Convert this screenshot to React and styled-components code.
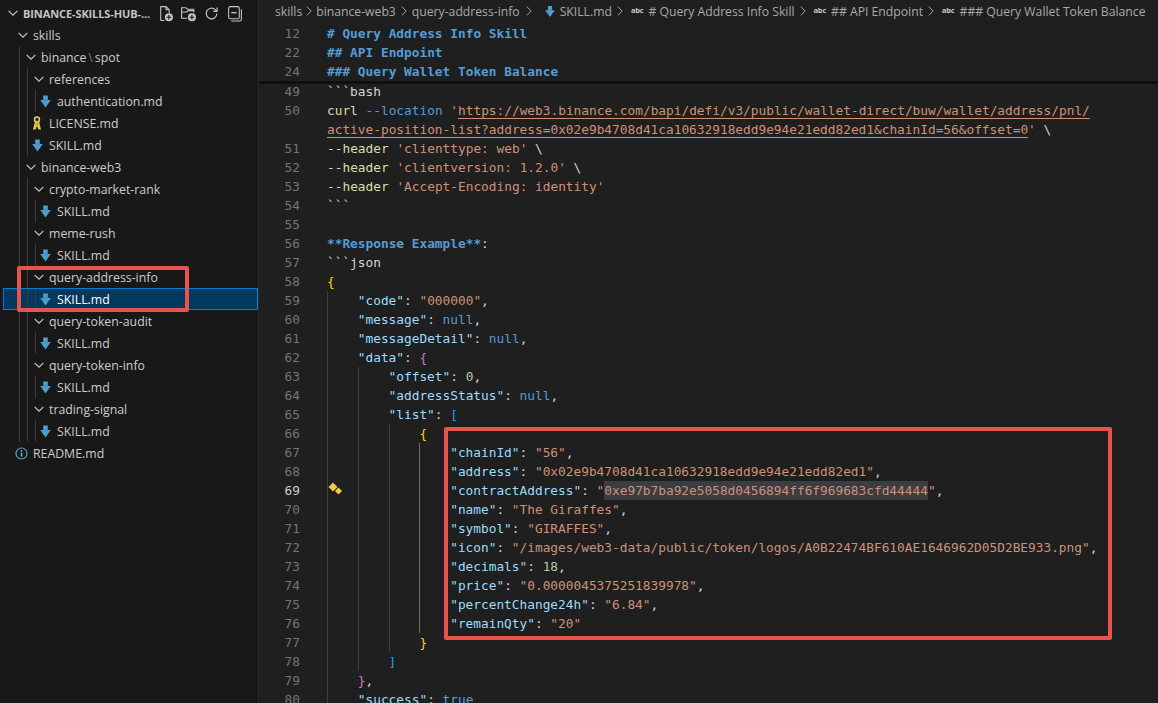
import React from 'react';
import styled, { createGlobalStyle } from 'styled-components';

const Global = createGlobalStyle`
  html, body { margin: 0; padding: 0; background: #1f1f1f; overflow: hidden; }
  #root { width: 1158px; height: 703px; }
`;

const Shell = styled.div`
  display: flex; width: 1158px; height: 703px; overflow: hidden;
  font-family: "Open Sans", "Noto Sans", sans-serif; color: #cccccc;
`;
const Sidebar = styled.aside`
  position: relative; width: 259px; flex: none; box-sizing: border-box;
  background: #181818; border-right: 1px solid #2b2b2b; padding-top: 2px;
`;
const Header = styled.div`
  display: flex; align-items: center; height: 22px; padding-left: 6px;
`;
const RootTitle = styled.span`
  font-size: 11px; font-weight: 700; margin-left: 3px; width: 132px; white-space: nowrap; color: #c4c4c4; letter-spacing: -0.1px;
`;
const Actions = styled.div`
  display: flex; gap: 6px; color: #c5c5c5; margin-left: 2px;
  svg { width: 17px; height: 17px; display: block; }
`;
const Row = styled.div`
  display: flex; align-items: stretch; height: 22px; margin-left: 3px; padding-left: 16px;
  font-size: 12.3px; white-space: nowrap;
  ${p => p.$selected && `background: #04395e; outline: 1px solid #007fd4; outline-offset: -1px; color: #ffffff;`}
`;
const TreeGuide = styled.span`
  flex: none; width: 8px; box-sizing: border-box; border-left: 1px solid #3b3b3b;
`;
const IconSlot = styled.span`
  flex: none; width: 14px; display: flex; align-items: center;
  svg { margin-left: ${p => p.$offset ?? -3}px; flex: none; display: block; }
`;
const RowLabel = styled.span`
  line-height: 24px;
`;
const Slash = styled.span`
  color: #777; padding: 0 2px;
`;
const Mark = styled.div`
  position: absolute; box-sizing: border-box; border-style: solid; border-color: #e9534f; border-radius: 2px; pointer-events: none;
  left: ${p => p.$l}px; top: ${p => p.$t}px; width: ${p => p.$w}px; height: ${p => p.$h}px; border-width: ${p => p.$b}px;
`;
const Editor = styled.main`
  position: relative; flex: 1; min-width: 0; background: #1f1f1f; display: flex; flex-direction: column; overflow: hidden;
`;
const Crumbs = styled.nav`
  display: flex; flex: none; align-items: center; height: 24px; padding: 0 0 2px 16px; box-sizing: border-box;
  font-size: 12.2px; color: #a9a9a9; white-space: nowrap;
`;
const CrumbSep = styled.svg`
  width: 14px; height: 14px; flex: none; margin: 0 ${p => p.$m ?? 1}px; color: #a9a9a9;
`;
const Abc = styled.span`
  font-size: 7.5px; font-weight: 700; margin: 0 5px 2px 3px; color: #c8c8c8; letter-spacing: -0.2px;
`;
const CrumbIcon = styled.span`
  display: flex; margin: 0 5px 0 7px;
`;
const Sticky = styled.div`
  position: relative; z-index: 2; background: #1f1f1f; box-shadow: 0 1px 2px #000; border-bottom: 1px solid #111;
`;
const Code = styled.div`
  font-family: "DejaVu Sans Mono", "Liberation Mono", monospace; font-size: 12.8px; line-height: 19px;
`;
const Line = styled.div`
  position: relative; display: flex; height: 19px; white-space: pre;
`;
const Num = styled.span`
  flex: none; width: 41px; margin-right: 27px; text-align: right; color: ${p => p.$active ? '#cccccc' : '#6e7681'};
`;
const Guide = styled.span`
  flex: none; width: 30.8px; box-sizing: border-box; border-left: 1px solid ${p => p.$active ? '#6f6f57' : '#404040'};
`;
const Body = styled.span`
  flex: none; color: #d4d4d4;
`;
const palette = {
  h: '#569cd6', k: '#9cdcfe', s: '#ce9178', n: '#b5cea8', c: '#569cd6', f: '#dcdcaa',
  y: '#ffd700', p: '#da70d6', b: '#179fff', d: '#d4d4d4',
};
const Tok = styled.span`
  color: ${p => palette[p.$t]};
  ${p => p.$t === 'h' && p.$bold && 'font-weight: 700;'}
  ${p => p.$u && 'text-decoration: underline; text-underline-offset: 3px;'}
  ${p => p.$sel && 'background: #3a3d41; display: inline-block; height: 19px;'}
`;
const Spark = styled.svg`
  position: absolute; left: 68px; top: 1px; width: 16px; height: 16px;
`;

const Chevron = () => (
  <svg width="14" height="14" viewBox="0 0 16 16" fill="none" stroke="#c5c5c5" strokeWidth="1.3"><path d="M3 5.5l5 5 5-5" /></svg>
);
const MdIcon = ({ small }) => (
  <svg width={small ? 10 : 11} height="13" viewBox="0 0 11 13"><path d="M3.2 0.5h4.6v4.6h3L5.5 12.5 0.2 5.1h3z" fill="#4f9dca" /><path d="M3.2 5.1h4.6" stroke="#3b7da3" strokeWidth="0.6" /></svg>
);
const KeyIcon = () => (
  <svg width="10" height="15" viewBox="0 0 10 15" fill="none"><circle cx="5" cy="3.4" r="2.4" stroke="#e3cf55" strokeWidth="1.6" /><path d="M3 5.5L1 13.5h2.6L5 10l1.4 3.5H9L7 5.5z" fill="#dcc84a" /><path d="M5 6.5v3" stroke="#8b7d22" strokeWidth="0.8" /></svg>
);
const InfoIcon = () => (
  <svg width="13" height="13" viewBox="0 0 13 13" fill="none"><circle cx="6.5" cy="6.5" r="5.5" stroke="#4f9dca" strokeWidth="1.2" /><circle cx="6.5" cy="3.8" r="0.9" fill="#6fb3dc" /><path d="M6.5 5.6v4" stroke="#6fb3dc" strokeWidth="1.5" /></svg>
);
const NewFile = () => (
  <svg viewBox="0 0 16 16" fill="none" stroke="currentColor" strokeWidth="1"><path d="M3.5 14.5v-13h5l3 3v3M8.5 1.5v3h3M3.5 14.5h3.5" /><circle cx="11.2" cy="11.5" r="3.8" fill="currentColor" stroke="none" /><path d="M11.2 9.3v4.4M9 11.5h4.4" stroke="#181818" strokeWidth="1.1" /></svg>
);
const NewFolder = () => (
  <svg viewBox="0 0 16 16" fill="none" stroke="currentColor" strokeWidth="1"><path d="M6.5 12.5h-5v-10h4l1.5 1.5h6v3M1.5 6.5h5l1.2-1.2h5.8" /><circle cx="11.2" cy="11.5" r="3.8" fill="currentColor" stroke="none" /><path d="M11.2 9.3v4.4M9 11.5h4.4" stroke="#181818" strokeWidth="1.1" /></svg>
);
const Refresh = () => (
  <svg viewBox="0 0 16 16" fill="none" stroke="currentColor" strokeWidth="1.1"><path d="M13 8a5 5 0 1 1-1.6-3.7L13 5.8" /><path d="M13.2 2.4v3.6H9.6" /></svg>
);
const Collapse = () => (
  <svg viewBox="0 0 16 16" fill="none" stroke="currentColor" strokeWidth="1"><rect x="2.5" y="1.5" width="10" height="11.5" rx="1.5" /><path d="M5 7.2h5" strokeWidth="1.3" /><path d="M14.5 4v9.5a1.5 1.5 0 0 1-1.5 1.5H5" /></svg>
);
const CrumbChevron = ({ m }) => (
  <CrumbSep $m={m} viewBox="0 0 16 16" fill="none" stroke="currentColor" strokeWidth="1.1"><path d="M5.5 3l5 5-5 5" /></CrumbSep>
);

const tree = [
  { d: 0, t: 'skills', kind: 'dir' },
  { d: 1, t: 'binance', slash: 'spot', kind: 'dir' },
  { d: 2, t: 'references', kind: 'dir' },
  { d: 3, t: 'authentication.md', kind: 'md' },
  { d: 2, t: 'LICENSE.md', kind: 'key' },
  { d: 2, t: 'SKILL.md', kind: 'md' },
  { d: 1, t: 'binance-web3', kind: 'dir' },
  { d: 2, t: 'crypto-market-rank', kind: 'dir' },
  { d: 3, t: 'SKILL.md', kind: 'md' },
  { d: 2, t: 'meme-rush', kind: 'dir' },
  { d: 3, t: 'SKILL.md', kind: 'md' },
  { d: 2, t: 'query-address-info', kind: 'dir' },
  { d: 3, t: 'SKILL.md', kind: 'md', selected: true },
  { d: 2, t: 'query-token-audit', kind: 'dir' },
  { d: 3, t: 'SKILL.md', kind: 'md' },
  { d: 2, t: 'query-token-info', kind: 'dir' },
  { d: 3, t: 'SKILL.md', kind: 'md' },
  { d: 2, t: 'trading-signal', kind: 'dir' },
  { d: 3, t: 'SKILL.md', kind: 'md' },
  { d: 0, t: 'README.md', kind: 'info' },
];

const T = (t, x, extra) => ({ t, x, ...extra });
const comma = T('d', ',');
const colon = T('d', ': ');
const kv = (key, tokens) => [T('k', `"${key}"`), colon, ...tokens];

const sticky = [
  { n: 12, tok: [T('h', '# Query Address Info Skill', { bold: 1 })] },
  { n: 22, tok: [T('h', '## API Endpoint', { bold: 1 })] },
  { n: 24, tok: [T('h', '### Query Wallet Token Balance', { bold: 1 })] },
];

const lines = [
  { n: 49, tok: [T('d', '```bash')] },
  { n: 50, tok: [T('f', 'curl'), T('d', ' '), T('c', '--location'), T('d', ' '), T('s', "'"), T('s', 'https://web3.binance.com/bapi/defi/v3/public/wallet-direct/buw/wallet/address/pnl/', { u: 1 })] },
  { tok: [T('s', 'active-position-list?address=0x02e9b4708d41ca10632918edd9e94e21edd82ed1&chainId=56&offset=0', { u: 1 }), T('s', "'"), T('d', ' \\')] },
  { n: 51, tok: [T('d', '--'), T('f', 'header'), T('d', ' '), T('s', "'clienttype: web'"), T('d', ' \\')] },
  { n: 52, tok: [T('d', '--'), T('f', 'header'), T('d', ' '), T('s', "'clientversion: 1.2.0'"), T('d', ' \\')] },
  { n: 53, tok: [T('d', '--'), T('f', 'header'), T('d', ' '), T('s', "'Accept-Encoding: identity'")] },
  { n: 54, tok: [T('d', '```')] },
  { n: 55, tok: [] },
  { n: 56, tok: [T('h', '**Response Example**', { bold: 1 }), T('d', ':')] },
  { n: 57, tok: [T('d', '```json')] },
  { n: 58, tok: [T('y', '{')] },
  { n: 59, g: 1, tok: kv('code', [T('s', '"000000"'), comma]) },
  { n: 60, g: 1, tok: kv('message', [T('c', 'null'), comma]) },
  { n: 61, g: 1, tok: kv('messageDetail', [T('c', 'null'), comma]) },
  { n: 62, g: 1, tok: kv('data', [T('p', '{')]) },
  { n: 63, g: 2, tok: kv('offset', [T('n', '0'), comma]) },
  { n: 64, g: 2, tok: kv('addressStatus', [T('c', 'null'), comma]) },
  { n: 65, g: 2, tok: kv('list', [T('b', '[')]) },
  { n: 66, g: 3, tok: [T('y', '{')] },
  { n: 67, g: 4, a: 1, tok: kv('chainId', [T('s', '"56"'), comma]) },
  { n: 68, g: 4, a: 1, tok: kv('address', [T('s', '"0x02e9b4708d41ca10632918edd9e94e21edd82ed1"'), comma]) },
  { n: 69, g: 4, a: 1, active: 1, tok: kv('contractAddress', [T('s', '"'), T('s', '0xe97b7ba92e5058d0456894ff6f969683cfd44444', { sel: 1 }), T('s', '"'), comma]) },
  { n: 70, g: 4, a: 1, tok: kv('name', [T('s', '"The Giraffes"'), comma]) },
  { n: 71, g: 4, a: 1, tok: kv('symbol', [T('s', '"GIRAFFES"'), comma]) },
  { n: 72, g: 4, a: 1, tok: kv('icon', [T('s', '"/images/web3-data/public/token/logos/A0B22474BF610AE1646962D05D2BE933.png"'), comma]) },
  { n: 73, g: 4, a: 1, tok: kv('decimals', [T('n', '18'), comma]) },
  { n: 74, g: 4, a: 1, tok: kv('price', [T('s', '"0.0000045375251839978"'), comma]) },
  { n: 75, g: 4, a: 1, tok: kv('percentChange24h', [T('s', '"6.84"'), comma]) },
  { n: 76, g: 4, a: 1, tok: kv('remainQty', [T('s', '"20"')]) },
  { n: 77, g: 3, tok: [T('y', '}')] },
  { n: 78, g: 2, tok: [T('b', ']')] },
  { n: 79, g: 1, tok: [T('p', '}'), comma] },
  { n: 80, g: 1, tok: kv('success', [T('c', 'true')]) },
];

const TreeRow = ({ item }) => (
  <Row $selected={item.selected}>
    {Array.from({ length: item.d }, (_, i) => <TreeGuide key={i} />)}
    <IconSlot $offset={item.kind === 'info' ? -4 : -3}>
      {item.kind === 'dir' && <Chevron />}
      {item.kind === 'md' && <MdIcon />}
      {item.kind === 'key' && <KeyIcon />}
      {item.kind === 'info' && <InfoIcon />}
    </IconSlot>
    <RowLabel>
      {item.t}
      {item.slash && <><Slash>\</Slash>{item.slash}</>}
    </RowLabel>
  </Row>
);

const CodeLine = ({ line }) => (
  <Line>
    <Num $active={line.active}>{line.n ?? ''}</Num>
    {Array.from({ length: line.g ?? 0 }, (_, i) => (
      <Guide key={i} $active={line.a && i === 3} />
    ))}
    <Body>
      {line.tok.map((k, i) => (
        <Tok key={i} $t={k.t} $bold={k.bold} $u={k.u} $sel={k.sel}>{k.x}</Tok>
      ))}
    </Body>
    {line.active && (
      <Spark viewBox="0 0 16 16" fill="#f2c744"><path d="M6 0.5l4.5 4.5L6 9.5 1.5 5z" /><path d="M11.5 5.5l3.5 3.5-3.5 3.5L8 9z" /></Spark>
    )}
  </Line>
);

export default function App() {
  return (
    <Shell>
      <Global />
      <Sidebar>
        <Header>
          <Chevron />
          <RootTitle>BINANCE-SKILLS-HUB-...</RootTitle>
          <Actions>
            <NewFile />
            <NewFolder />
            <Refresh />
            <Collapse />
          </Actions>
        </Header>
        {tree.map((item, i) => <TreeRow key={i} item={item} />)}
        <Mark $l={17} $t={266} $w={172} $h={46} $b={4} />
      </Sidebar>
      <Editor>
        <Crumbs>
          skills<CrumbChevron m={0} />binance-web3<CrumbChevron m={1} />query-address-info<CrumbChevron m={2} />
          <CrumbIcon><MdIcon small /></CrumbIcon>SKILL.md<CrumbChevron />
          <Abc>abc</Abc># Query Address Info Skill<CrumbChevron />
          <Abc>abc</Abc>## API Endpoint<CrumbChevron />
          <Abc>abc</Abc>### Query Wallet Token Balance
        </Crumbs>
        <Code>
          <Sticky>{sticky.map(l => <CodeLine key={l.n} line={l} />)}</Sticky>
          {lines.map((l, i) => <CodeLine key={i} line={l} />)}
        </Code>
        <Mark $l={185} $t={427} $w={668} $h={213} $b={4} />
      </Editor>
    </Shell>
  );
}
